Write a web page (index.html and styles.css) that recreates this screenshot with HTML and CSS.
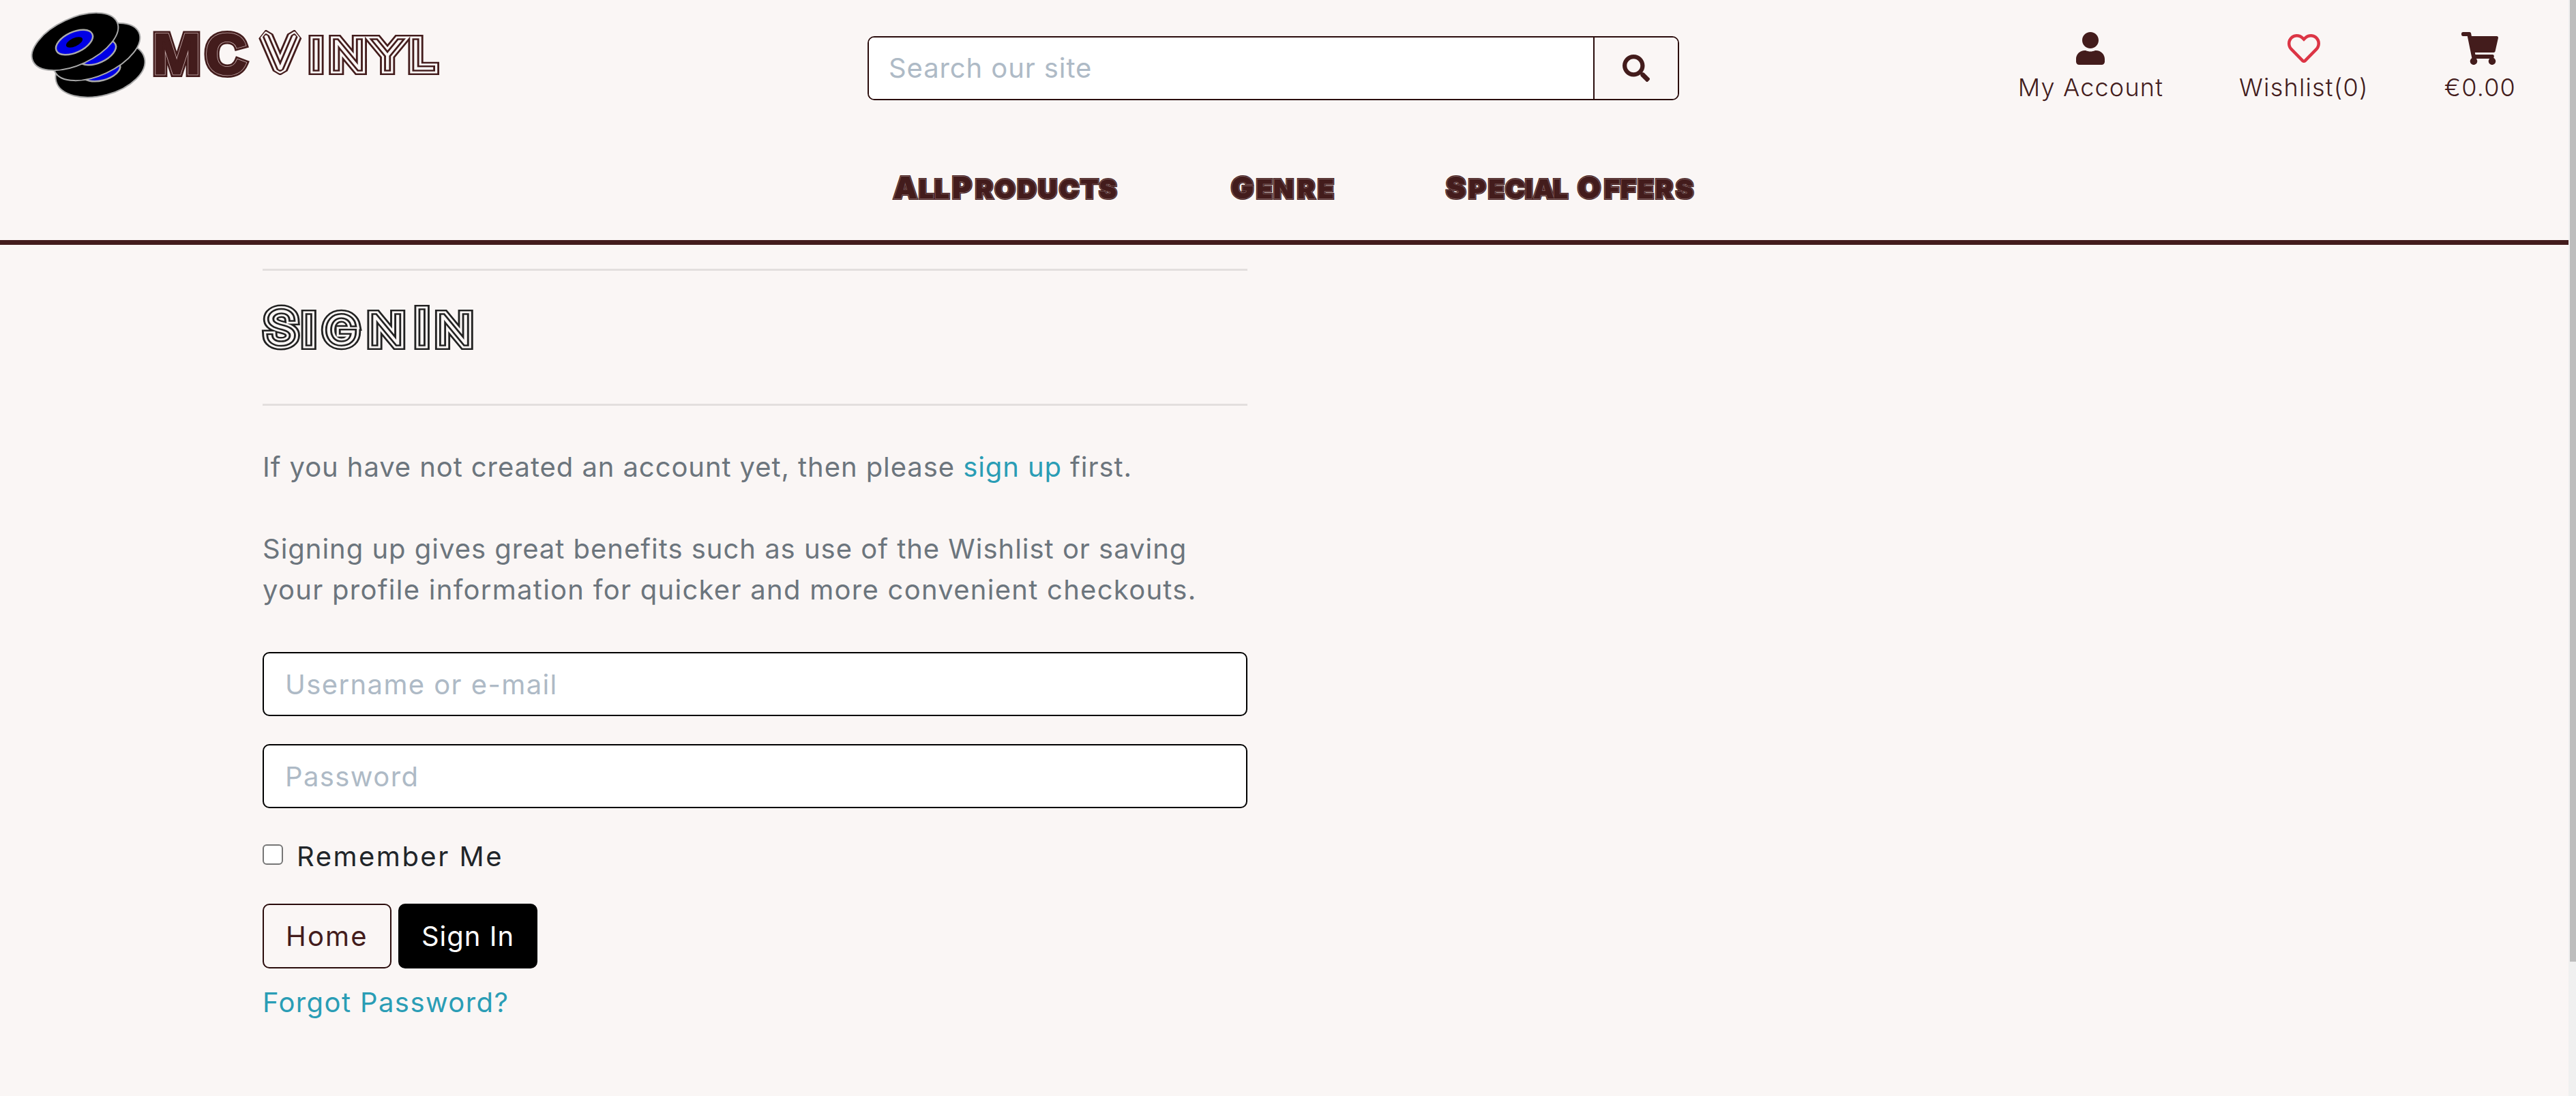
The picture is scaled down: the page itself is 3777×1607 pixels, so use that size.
FILE: index.html
```html
<!DOCTYPE html>
<html lang="en">
<head>
  <meta charset="UTF-8">
  <title>Sign In | MC Vinyl</title>
  <link rel="stylesheet" href="styles.css">
</head>
<body>
  <header class="site-header">
    <div class="top-row">
      <a class="logo" href="#" aria-label="MC Vinyl">
        <svg class="logo-svg" width="600" height="130" viewBox="45 18 600 130">
          <g class="disc">
            <ellipse class="disc-body" cx="147" cy="102" rx="67" ry="38" transform="rotate(-15 147 102)"/>
            <ellipse class="disc-label" cx="148" cy="103" rx="29" ry="15" transform="rotate(-15 148 103)"/>
          </g>
          <g class="disc">
            <ellipse class="disc-body" cx="142" cy="76" rx="68" ry="34" transform="rotate(-25 142 76)"/>
            <ellipse class="disc-label" cx="143" cy="77" rx="29" ry="15" transform="rotate(-25 143 77)"/>
          </g>
          <g class="disc">
            <ellipse class="disc-body" cx="110" cy="61" rx="68" ry="34" transform="rotate(-25 110 61)"/>
            <ellipse class="disc-label" cx="109" cy="62" rx="29" ry="15" transform="rotate(-25 109 62)"/>
            <ellipse class="disc-hole" cx="109" cy="62" rx="13" ry="6" transform="rotate(-25 109 62)"/>
          </g>
          <g class="heavy-a"><text id="logo-mc" class="logo-mc"><tspan x="224 301" y="108">MC</tspan></text></g>
          <use class="heavy-b" href="#logo-mc"/>
          <use class="heavy-c" href="#logo-mc"/>
          <g class="stretch">
            <g class="line-a"><text id="logo-vinyl" class="logo-vinyl"><tspan class="logo-v" x="336" y="101">V</tspan><tspan x="396 422 476 523" y="101">inyl</tspan></text></g>
            <use class="line-b" href="#logo-vinyl"/>
            <use class="line-c" href="#logo-vinyl"/>
            <use class="line-d" href="#logo-vinyl"/>
          </g>
        </svg>
      </a>
      <form class="search">
        <input class="search-input" type="text" placeholder="Search our site">
        <button class="search-btn" type="button" aria-label="Search">
          <svg class="icon-search" viewBox="0 0 512 512"><path d="M505 442.7L405.3 343c-4.5-4.5-10.6-7-17-7H372c27.6-35.3 44-79.7 44-128C416 93.1 322.9 0 208 0S0 93.1 0 208s93.1 208 208 208c48.3 0 92.7-16.4 128-44v16.3c0 6.4 2.5 12.5 7 17l99.7 99.7c9.4 9.4 24.6 9.4 33.9 0l28.3-28.3c9.4-9.4 9.4-24.6.1-34zM208 336c-70.7 0-128-57.2-128-128 0-70.7 57.2-128 128-128 70.7 0 128 57.2 128 128 0 70.7-57.2 128-128 128z"/></svg>
        </button>
      </form>
      <ul class="user-links">
        <li>
          <a href="#">
            <svg class="icon" viewBox="0 0 448 512"><path d="M224 256c70.7 0 128-57.3 128-128S294.7 0 224 0 96 57.3 96 128s57.3 128 128 128zm89.6 32h-16.7c-22.2 10.2-46.9 16-72.9 16s-50.6-5.8-72.9-16h-16.7C60.2 288 0 348.2 0 422.4V464c0 26.5 21.5 48 48 48h352c26.5 0 48-21.5 48-48v-41.6c0-74.2-60.2-134.4-134.4-134.4z"/></svg>
            <span>My Account</span>
          </a>
        </li>
        <li>
          <a href="#">
            <svg class="icon icon-heart" viewBox="0 0 512 512"><path d="M458.4 64.3C400.6 15.7 311.3 23 256 79.3 200.7 23 111.4 15.6 53.6 64.3-21.6 127.6-10.6 230.8 43 285.5l175.4 178.7c10 10.2 23.4 15.9 37.6 15.9 14.3 0 27.6-5.6 37.6-15.8L469 285.6c53.5-54.7 64.7-157.9-10.6-221.3zm-23.6 187.5L259.4 430.5c-2.4 2.4-4.4 2.4-6.8 0L77.2 251.8c-36.5-37.2-43.9-107.6 7.3-150.7 38.9-32.7 98.9-27.8 136.5 10.5l35 35.7 35-35.7c37.8-38.5 97.8-43.2 136.5-10.6 51.1 43.1 43.5 113.9 7.3 150.8z"/></svg>
            <span>Wishlist(0)</span>
          </a>
        </li>
        <li>
          <a href="#">
            <svg class="icon" viewBox="0 0 576 512"><path d="M528.12 301.319l47.273-208C578.806 78.301 567.391 64 551.99 64H159.208l-9.166-44.81C147.758 8.021 137.93 0 126.529 0H24C10.745 0 0 10.745 0 24v16c0 13.255 10.745 24 24 24h69.883l70.248 343.435C147.325 417.1 136 435.222 136 456c0 30.928 25.072 56 56 56s56-25.072 56-56c0-15.674-6.447-29.835-16.824-40h209.647C430.447 426.165 424 440.326 424 456c0 30.928 25.072 56 56 56s56-25.072 56-56c0-22.172-12.888-41.332-31.579-50.405l5.517-24.276c3.413-15.018-8.002-29.319-23.403-29.319H218.117l-6.545-32h293.145c11.206 0 20.92-7.754 23.403-18.681z"/></svg>
            <span>€0.00</span>
          </a>
        </li>
      </ul>
    </div>
    <nav class="main-nav">
      <a href="#">
        <svg width="338" height="44" viewBox="0 0 338 44">
          <g class="nav-a"><text id="nav-all" class="nav-text"><tspan class="nav-cap" x="4" y="35">A</tspan><tspan x="41 64" y="35">ll</tspan> <tspan class="nav-cap" x="90" y="35">P</tspan><tspan x="124 152.5 185.5 216 247 278 305.6" y="35">roducts</tspan></text></g>
          <use class="nav-b" href="#nav-all"/>
          <use class="nav-c" href="#nav-all"/>
        </svg>
      </a>
      <a href="#">
        <svg width="158" height="44" viewBox="0 0 158 44">
          <g class="nav-a"><text id="nav-genre" class="nav-text"><tspan class="nav-cap" x="4" y="35">G</tspan><tspan x="41 66 101 131" y="35">enre</tspan></text></g>
          <use class="nav-b" href="#nav-genre"/>
          <use class="nav-c" href="#nav-genre"/>
        </svg>
      </a>
      <a href="#">
        <svg width="368" height="44" viewBox="0 0 368 44">
          <g class="nav-a"><text id="nav-offers" class="nav-text"><tspan class="nav-cap" x="4" y="35">S</tspan><tspan x="37 66 91 120 132 161" y="35">pecial</tspan> <tspan class="nav-cap" x="197" y="35">O</tspan><tspan x="236 260 285 311 341" y="35">ffers</tspan></text></g>
          <use class="nav-b" href="#nav-offers"/>
          <use class="nav-c" href="#nav-offers"/>
        </svg>
      </a>
    </nav>
  </header>

  <main class="signin">
    <hr class="rule">
    <h1 class="page-title">
      <svg width="320" height="90" viewBox="0 0 320 90">
        <g class="stretch">
          <g class="line-a"><text id="title" class="title-text"><tspan class="title-cap" x="3.5" y="62">S</tspan><tspan x="52 79.5 136" y="62">ign</tspan> <tspan class="title-cap" x="195" y="62">I</tspan><tspan x="222.6" y="62">n</tspan></text></g>
          <use class="line-b" href="#title"/>
          <use class="line-c" href="#title"/>
          <use class="line-d" href="#title"/>
        </g>
      </svg>
    </h1>
    <hr class="rule">
    <p class="intro">
      <span class="line-tight">If you have not created an account yet, then please <a href="#">sign up</a> first.</span><br><br>
      <span class="line-mid">Signing up gives great benefits such as use of the Wishlist or saving</span><br>
      <span class="line-wide">your profile information for quicker and more convenient checkouts.</span>
    </p>
    <form class="login-form">
      <input class="field" type="text" placeholder="Username or e-mail">
      <input class="field" type="password" placeholder="Password">
      <label class="remember"><input class="check" type="checkbox"> Remember Me</label>
      <div class="actions">
        <a class="btn btn-outline" href="#">Home</a>
        <button class="btn btn-black" type="submit">Sign In</button>
      </div>
      <a class="forgot" href="#">Forgot Password?</a>
    </form>
  </main>
  <div class="scroll-track"><div class="scroll-thumb"></div></div>
</body>
</html>
```

FILE: styles.css
```css
* { box-sizing: border-box; }
html, body { height: 100%; overflow: hidden; }
body { margin: 0; background: #faf6f5; color: #6c757d; font-family: Inter, "Liberation Sans", sans-serif; font-size: 40px; font-weight: 375; line-height: 60px; letter-spacing: 1px; }
a { color: inherit; text-decoration: none; }
svg { display: block; overflow: visible; }
text { text-transform: uppercase; letter-spacing: 0; stroke-miterlimit: 3; }

.site-header { border-bottom: 7px solid #431c1c; height: 359px; }
.top-row { display: flex; align-items: flex-start; height: 200px; }
.logo { display: block; margin: 18px 0 0 45px; }

.disc-body { fill: #000; stroke: #aaa; stroke-width: 2px; }
.disc-label { fill: #0000e6; stroke: #aaa; stroke-width: 2.5px; }
.disc-hole { fill: #000; }

.logo-mc { font: 700 84px "Liberation Sans", sans-serif; }
.logo-vinyl { font: 100 56px Inter, sans-serif; }
.logo-v { font-size: 66px; stroke-linejoin: bevel; }
.heavy-a { stroke: #431c1c; stroke-width: 10px; fill: #431c1c; }
.heavy-b { stroke: #c9b0b0; stroke-width: 4.5px; fill: #431c1c; }
.heavy-c { stroke: #431c1c; stroke-width: 3px; fill: #431c1c; }

/* concentric lines: same text stroked four times, wide to narrow */
.stretch { transform: scaleX(1.15); }
.line-a { stroke: #431c1c; stroke-width: 18px; fill: #faf6f5; }
.line-b { stroke: #faf6f5; stroke-width: 13px; fill: #faf6f5; }
.line-c { stroke: #431c1c; stroke-width: 7.5px; fill: #faf6f5; }
.line-d { stroke: #faf6f5; stroke-width: 2.5px; fill: #faf6f5; }
.page-title .line-a, .page-title .line-c { stroke: #222; }

.search { display: flex; width: 1190px; height: 94px; margin: 53px 0 0 627px; border: 2px solid #2a0c0c; border-radius: 10px; overflow: hidden; }
.search-input { flex: 1; min-width: 0; border: 0; outline: 0; padding: 0 29px; background: #fff; font: inherit; letter-spacing: .9px; }
.search-btn { width: 124px; padding: 0; border: 0; border-left: 2px solid #2a0c0c; background: #faf6f5; display: flex; align-items: center; justify-content: center; }
.icon-search { width: 40px; height: 40px; fill: #431c1c; }
::placeholder { color: #aebac6; opacity: 1; }

.user-links { display: flex; gap: 111px; list-style: none; margin: 47px 88px 0 auto; padding: 0; color: #431c1c; font-size: 36px; font-weight: 300; line-height: 54px; letter-spacing: 1.2px; }
.user-links a { display: flex; flex-direction: column; align-items: center; }
.icon { height: 48px; fill: #431c1c; margin-bottom: 6px; }
.icon-heart { fill: #dc3545; }

.main-nav { display: flex; align-items: center; gap: 157px; height: 152px; padding: 4px 0 0 1306px; }
.nav-text { font: 900 39px Inter, sans-serif; }
.nav-cap { font-size: 44px; }
.nav-a { stroke: #431c1c; stroke-width: 4px; fill: #431c1c; }
.nav-b { stroke: #a08484; stroke-width: 1.6px; fill: #431c1c; }
.nav-c { stroke: #431c1c; stroke-width: .7px; fill: #431c1c; }

.signin { width: 1444px; margin: 35px 0 0 385px; }
.rule { margin: 0; border: 0; border-top: 3px solid #e3dfde; }
.page-title { height: 195px; margin: 0; padding-top: 45px; }
.title-text { font: 100 56px Inter, sans-serif; }
.title-cap { font-size: 66px; }

.intro { margin: 60px 0 61px; white-space: nowrap; }
.intro a, .forgot { color: #2a9db5; }
.line-tight { letter-spacing: .92px; }
.line-mid { letter-spacing: .98px; }
.line-wide { letter-spacing: 1.27px; }

.login-form { display: flex; flex-direction: column; align-items: flex-start; }
.field { width: 100%; height: 94px; margin-bottom: 41px; padding: 0 31px; border: 2.5px solid #000; border-radius: 10px; background: #fff; font: inherit; letter-spacing: 1.4px; }
.remember { display: flex; align-items: center; gap: 20px; height: 60px; margin-bottom: 39px; color: #212529; letter-spacing: 2.5px; font-weight: 400; }
.check { appearance: none; width: 30px; height: 30px; margin: -6px 0 0; border: 2.5px solid #767676; border-radius: 6px; background: #fff; }
.actions { display: flex; gap: 10px; }
.btn { display: block; height: 95px; padding: 0 32px; border-radius: 10px; font: inherit; letter-spacing: 1px; line-height: 90px; }
.btn-outline { border: 2px solid #2a0c0c; color: #431c1c; letter-spacing: 2.2px; line-height: 91px; }
.btn-black { border: 2.5px solid #000; background: #000; color: #fff; }
.forgot { margin-top: 20px; letter-spacing: 1.4px; }

.scroll-track { position: fixed; top: 0; right: 0; bottom: 0; width: 11px; padding-left: 2px; background: #f0f0f0; }
.scroll-thumb { height: 1410px; background: #bdbdbd; }
```
